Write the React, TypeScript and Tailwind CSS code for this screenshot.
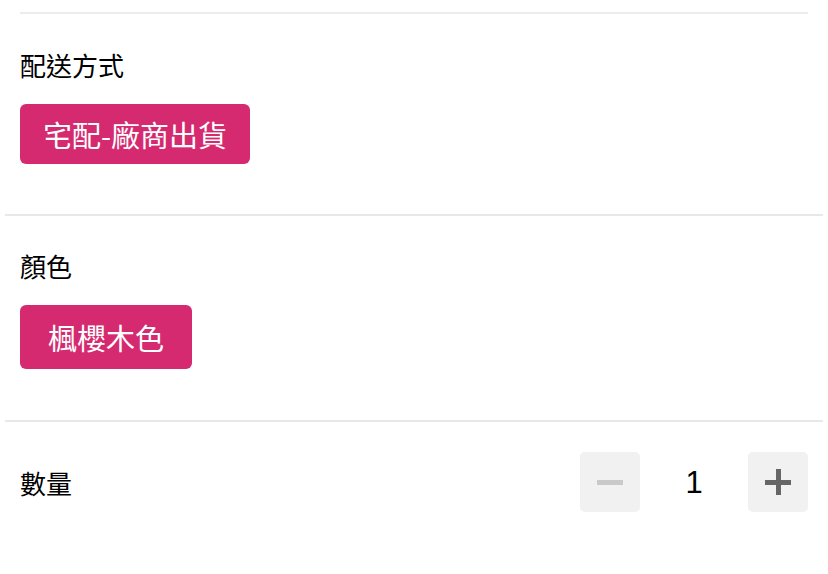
export default function App() {
  return (
    <div
      className="w-[828px] h-[574px] bg-white px-5 pt-3 text-black overflow-hidden"
      style={{ fontFamily: '"Noto Sans CJK TC", "Noto Sans", sans-serif' }}
    >
      <div className="h-[2px] bg-[#ececec]" />

      {/* 配送方式 */}
      <div className="pt-[34px] pb-[50px]">
        <div className="text-[26px] leading-[34px]">配送方式</div>
        <div className="mt-[22px] flex">
          <button className="h-[60px] px-[23px] rounded-[6px] bg-[#d52a6f] text-white text-[29px] leading-none">
            宅配-廠商出貨
          </button>
        </div>
      </div>

      <div className="-mx-[15px] h-[2px] bg-[#e8e8e8]" />

      {/* 顏色 */}
      <div className="pt-[33px] pb-[51px]">
        <div className="text-[26px] leading-[34px]">顏色</div>
        <div className="mt-[22px] flex">
          <button className="h-[64px] px-[28px] rounded-[6px] bg-[#d52a6f] text-white text-[29px] leading-none">
            楓櫻木色
          </button>
        </div>
      </div>

      <div className="-mx-[15px] h-[2px] bg-[#e8e8e8]" />

      {/* 數量 */}
      <div className="pt-[30px] flex items-center justify-between">
        <div className="text-[26px] leading-[34px] pt-[2px]">數量</div>
        <div className="flex items-center">
          <button className="w-[60px] h-[60px] rounded-[5px] bg-[#f1f1f1] flex items-center justify-center">
            <span className="block w-[26px] h-[5px] bg-[#c9c9c9]" />
          </button>
          <div
            className="w-[108px] text-center text-[31px] leading-none"
            style={{ fontFamily: '"Liberation Sans", Arial, sans-serif' }}
          >
            1
          </div>
          <button className="w-[60px] h-[60px] rounded-[5px] bg-[#f1f1f1] flex items-center justify-center relative">
            <span className="block w-[26px] h-[5px] bg-[#666666]" />
            <span className="absolute w-[5px] h-[26px] bg-[#666666]" />
          </button>
        </div>
      </div>
    </div>
  );
}
